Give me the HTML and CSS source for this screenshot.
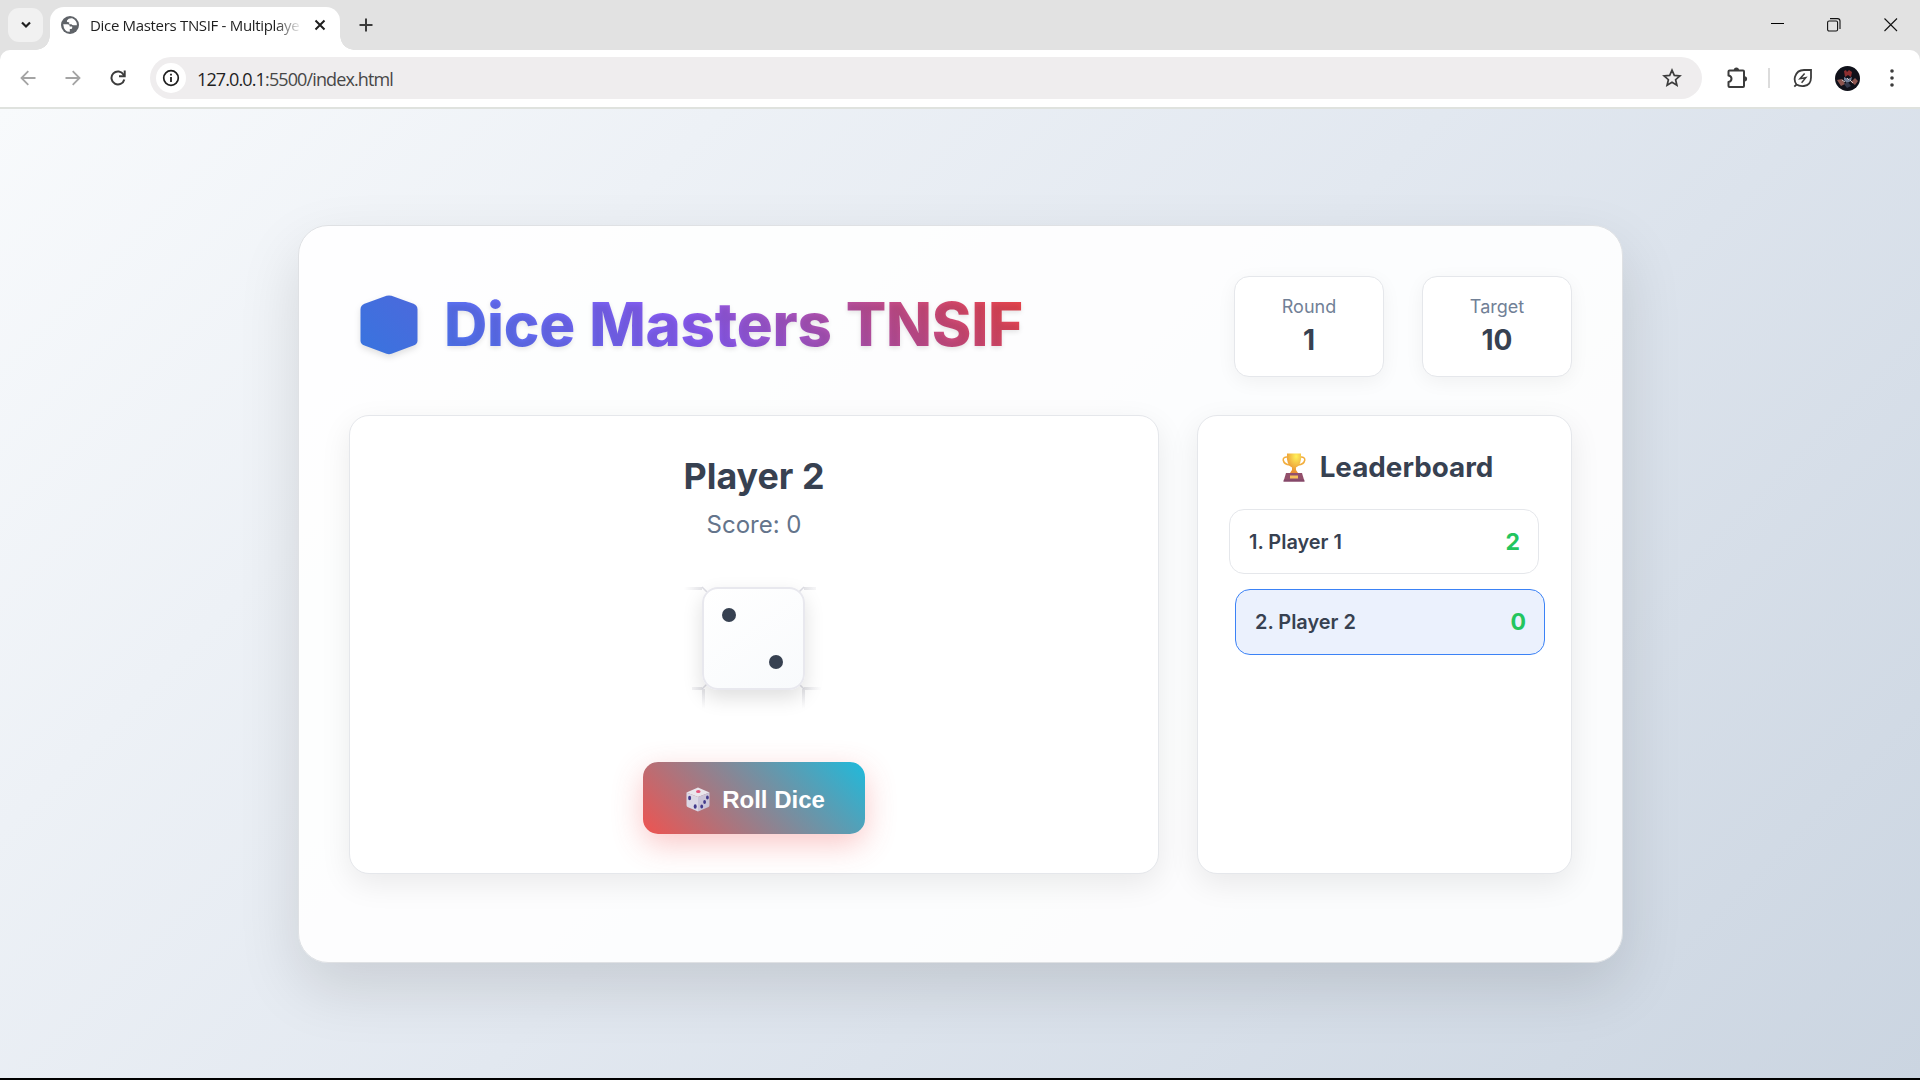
FILE: index.html
```html
<!DOCTYPE html>
<html lang="en">
<head>
<meta charset="utf-8">
<title>Dice Masters TNSIF - Multiplayer</title>
<link rel="stylesheet" href="styles.css">
</head>
<body>
<div class="tabstrip">
  <div class="tab-search"><svg width="12" height="8" viewBox="0 0 12 8"><path d="M2 1.5 6 5.5 10 1.5" fill="none" stroke="#1f1f1f" stroke-width="2.2"/></svg></div>
  <div class="tab">
    <svg class="globe" width="18" height="18" viewBox="0 0 18 18"><circle cx="9" cy="9" r="9" fill="#5f6368"/><path d="M2.2 8.2H6.500Q8.800 8.200 8.800 10.500H11.200V12Q11.200 13 10 13H8.800V15.800Q3 16 2.200 8.200ZM11.200 2.200Q7.500 1.800 6 4.500 5.200 6.300 7.200 6.300H8.200V8.200H10.500Q11 9.300 12.500 9.300H15.900Q16.200 4.500 11.200 2.200Z" fill="#fff"/></svg>
    <span class="tab-title">Dice Masters TNSIF - Multiplaye</span>
    <svg class="tab-close" width="12" height="12" viewBox="0 0 12 12"><path d="M1.500 1.500 10.500 10.500M10.500 1.500 1.500 10.500" stroke="#1f1f1f" stroke-width="2"/></svg>
  </div>
  <svg class="new-tab" width="14" height="14" viewBox="0 0 14 14"><path d="M7 .5V13.500M.5 7H13.500" stroke="#3c3c3c" stroke-width="2"/></svg>
  <div class="window-controls">
    <svg width="14" height="14" viewBox="0 0 14 14"><path d="M1 5.500H14" stroke="#000"/></svg>
    <svg width="14" height="14" viewBox="0 0 14 14" fill="none" stroke="#111" stroke-width="1.100"><rect x=".6" y="3" width="10" height="10" rx="1.500"/><path d="M3 .6H10.500Q13 .6 13 3V11"/></svg>
    <svg width="14" height="14" viewBox="0 0 14 14"><path d="M.5 .5 13 13M13 .5 .5 13" stroke="#111" stroke-width="1.100"/></svg>
  </div>
</div>
<div class="toolbar">
  <svg class="nav-icon" width="16" height="16" viewBox="0 0 16 16" fill="none" stroke="#a4a4a4" stroke-width="1.800"><path d="M15.500 8H2M8.300 1.200 1.500 8 8.300 14.800"/></svg>
  <svg class="nav-icon" width="16" height="16" viewBox="0 0 16 16" fill="none" stroke="#a4a4a4" stroke-width="1.800"><path d="M.5 8H14M7.700 1.200 14.500 8 7.700 14.800"/></svg>
  <svg class="nav-icon" width="16" height="16" viewBox="0 0 16 16" fill="none" stroke="#3c3c3c" stroke-width="2"><path d="M14.300 9.500A6.500 6.500 0 1 1 13.600 4.700L14.300 6"/><path d="M14.700 .5V6.200H9"/></svg>
  <div class="address">
    <div class="site-info"><svg width="18" height="18" viewBox="0 0 18 18"><circle cx="9" cy="9" r="7.300" fill="none" stroke="#1f1f1f" stroke-width="1.700"/><path d="M9 8V13M9 4.800V6.600" stroke="#1f1f1f" stroke-width="1.800"/></svg></div>
    <span class="url"><span class="host">127.0.0.1</span>:5500/index.html</span>
    <svg class="star" width="20" height="20" viewBox="0 0 20 20"><path d="M10 2.200 12.300 7.400 17.900 7.900 13.600 11.700 14.900 17.200 10 14.200 5.100 17.200 6.400 11.700 2.100 7.900 7.700 7.400Z" fill="none" stroke="#3c3c3c" stroke-width="1.700"/></svg>
  </div>
  <svg class="puzzle" width="22" height="22" viewBox="0 0 22 22"><path d="M3.500 3.600H17Q18 3.600 18 4.600V19Q18 20 17 20H3.500Q2.500 20 2.500 19V15Q5.500 14.400 5.500 11.800T2.500 8.600V4.600Q2.500 3.600 3.500 3.600Z" fill="none" stroke="#3c3c3c" stroke-width="2" stroke-linejoin="round"/><path d="M7.800 3A2.600 2.600 0 0 1 13 3ZM18.500 9.200A2.600 2.600 0 0 1 18.500 14.400Z" fill="#3c3c3c"/></svg>
  <span class="divider"></span>
  <svg class="leaf" width="20" height="20" viewBox="0 0 20 20" fill="none" stroke="#3c3c3c" stroke-width="1.800"><path d="M3.500 16.500Q.8 13 2 8.800C3.300 4.500 6 2 11 2H18V9.500C18 14.500 15 17.500 11 18Q6.500 18.500 3.500 16.500L1.300 18.600"/><path d="M11.600 5.500 7 10.700 12.800 9.700 8.600 14.800" stroke-width="1.500"/></svg>
  <svg class="avatar" width="25" height="25" viewBox="0 0 25 25"><circle cx="12.500" cy="12.500" r="12.500" fill="#10111a"/><path d="M9 5 11 4 12 6 14 4 17 6 16 11 13 9 10 11Z" fill="#8d2f30"/><path d="M9 11 13 13 17 11 16 15 12 17 9 14Z" fill="#70809a"/><path d="M2 14 7 13 10 18 6 20ZM16 16 20 12 23 15 20 19Z" fill="#8d554f"/><path d="M9 18 13 16 16 20 12 22Z" fill="#34394c"/><path d="M7 14 10 16M15 14 18 17M12 12 14 14" stroke="#d4c5c4"/></svg>
  <svg class="menu" width="4" height="18" viewBox="0 0 4 18" fill="#3c3c3c"><circle cx="2" cy="2" r="1.800"/><circle cx="2" cy="9" r="1.800"/><circle cx="2" cy="16" r="1.800"/></svg>
</div>

<main class="page">
  <section class="game">
    <header class="game-header">
      <h1>
        <svg class="hexagon" width="58" height="60" viewBox="0 0 58 60"><defs><linearGradient id="hex" x1="0" y1="1" x2="1" y2="0"><stop offset="0" stop-color="#3874df"/><stop offset="1" stop-color="#4c69dc"/></linearGradient></defs><path d="M26.500.8Q29 .1 31.500.8L53.500 8.800Q57.500 10.300 57.500 14.500V45.500Q57.500 49 53.500 50.600L31.500 58.700Q29 59.600 26.500 58.700L4.500 50.600Q.5 49 .5 45.500V14.500Q.5 10.300 4.500 8.800Z" fill="url(#hex)"/></svg>
        <span>Dice Masters TNSIF</span>
      </h1>
      <div class="stats">
        <div class="stat"><span class="stat-label">Round</span><span class="stat-value">1</span></div>
        <div class="stat"><span class="stat-label">Target</span><span class="stat-value">10</span></div>
      </div>
    </header>
    <div class="board">
      <div class="card play">
        <h2>Player 2</h2>
        <p class="score">Score: 0</p>
        <div class="die">
          <svg class="die-edges" width="150" height="150" viewBox="0 0 150 150"><defs><linearGradient id="fr"><stop offset="0" stop-color="#e4e4e8"/><stop offset="1" stop-color="#e4e4e8" stop-opacity="0"/></linearGradient><linearGradient id="fl" x1="1" x2="0"><stop offset="0" stop-color="#e4e4e8"/><stop offset="1" stop-color="#e4e4e8" stop-opacity="0"/></linearGradient><linearGradient id="fd" x2="0" y2="1"><stop offset="0" stop-color="#e4e4e8"/><stop offset="1" stop-color="#e4e4e8" stop-opacity="0"/></linearGradient></defs><path fill="url(#fl)" d="M6 24h18v3H6zM14 124h10v3H14z"/><path fill="url(#fr)" d="M126 24h12v3h-12zM126 124h18v3h-18z"/><path fill="url(#fd)" d="M24 126h3v20h-3zM124 126h3v20h-3z"/><path d="M24 24l5 5M126 24l-5 5M24 126l5-5M126 126l-5-5" stroke="#dddde4" stroke-width="1.500"/></svg>
          <div class="face"><span class="pip"></span><span class="pip pip-end"></span></div>
        </div>
        <button class="roll">
          <svg width="24" height="25" viewBox="0 0 24 25"><path d="M12 .5 23.500 5.500 12 10 .5 5.500Z" fill="#e9e6ec"/><path d="M.5 5.500 12 10V24.500L1.500 20Q.5 19.500.5 18Z" fill="#dcd8e5"/><path d="M23.500 5.500 12 10V24.500L22.500 20Q23.500 19.500 23.500 18Z" fill="#cac4d8"/><ellipse cx="12.300" cy="4.600" rx="2.300" ry="1.500" fill="#e4567c"/><g fill="#433b8c"><ellipse cx="3.600" cy="11" rx="1.500" ry="2.200"/><ellipse cx="9.200" cy="19.500" rx="1.500" ry="2.200"/><ellipse cx="21.400" cy="10.500" rx="1.400" ry="2.100"/><ellipse cx="18.600" cy="15" rx="1.400" ry="2.100"/><ellipse cx="15.700" cy="19.500" rx="1.400" ry="2.100"/></g></svg>
          <span>Roll Dice</span>
        </button>
      </div>
      <div class="card leaderboard">
        <h3>
          <svg width="24" height="29" viewBox="0 0 24 29"><defs><radialGradient id="cup" cx=".65" cy=".15" r=".8"><stop offset="0" stop-color="#fff15a"/><stop offset="1" stop-color="#ea9133"/></radialGradient></defs><path d="M6 4.200Q1 3.500 1.200 7 2 11.500 8 12M18 4.200Q23 3.500 22.800 7 22 11.500 16 12" fill="none" stroke="#f2ae3e" stroke-width="1.500"/><path d="M5 .5H19Q20 11.500 14 14.500V17L16 20H8L10 17V14.500Q4 11.500 5 .5Z" fill="url(#cup)"/><path d="M4 20H20L22.500 28.500H1.500Z" fill="#93506b"/><path d="M1.900 26.500H22.100L22.500 28.500H1.500Z" fill="#84486a"/><rect x="8" y="22.500" width="8" height="3" fill="#f7c05a"/></svg>
          <span>Leaderboard</span>
        </h3>
        <ol class="ranking">
          <li><span>1. Player 1</span><b>2</b></li>
          <li class="current"><span>2. Player 2</span><b>0</b></li>
        </ol>
      </div>
    </div>
  </section>
</main>
</body>
</html>
```
FILE: styles.css
```css
* { box-sizing: border-box; }
body {
  margin: 0;
  height: 1080px;
  overflow: hidden;
  display: flex;
  flex-direction: column;
  background: #e2e2e2;
  border-bottom: 2px solid #000;
  font-family: Inter, "Liberation Sans", sans-serif;
  color: #374151;
}
svg { display: block; flex: none; }
h1, h2, h3, p, ol { margin: 0; padding: 0; }

/* Browser chrome */
.tabstrip { height: 50px; flex: none; display: flex; align-items: center; padding-left: 8px; }
.tab-search { width: 35px; height: 34px; border-radius: 11px; background: #f1f1f1; display: grid; place-items: center; }
.tab {
  width: 290px; height: 43px; margin: 7px 0 0 7px; padding: 0 14px 7px 11px;
  background: #fff; border-radius: 14px 14px 0 0; display: flex; align-items: center;
  position: relative;
}
.tab::before, .tab::after { content: ""; position: absolute; bottom: 0; width: 14px; height: 14px; }
.tab::before { left: -14px; background: radial-gradient(circle at 0 0, transparent 13.5px, #fff 14px); }
.tab::after { right: -14px; background: radial-gradient(circle at 100% 0, transparent 13.5px, #fff 14px); }
.tab-title {
  margin-left: 11px; width: 212px; white-space: nowrap;
  font: 15px/22px "Open Sans", sans-serif; letter-spacing: -0.32px; color: #1f1f1f;
  mask-image: linear-gradient(90deg, #000 185px, transparent 212px);
}
.tab-close { margin-left: auto; }
.new-tab { margin-left: 19px; }
.window-controls { margin-left: auto; padding-right: 22px; display: flex; gap: 43px; }
.toolbar {
  height: 59px; flex: none; display: flex; align-items: center; padding: 0 26px 1px 20px;
  background: #fff; border-radius: 10px 10px 0 0; border-bottom: 2px solid #dfe2de;
}
.nav-icon { margin-right: 29px; }
.address {
  width: 1552px; height: 42px; margin-left: -5px; padding: 0 20px 0 6px; border-radius: 21px;
  background: #efedee; display: flex; align-items: center;
}
.site-info { width: 30px; height: 30px; border-radius: 50%; background: #fff; display: grid; place-items: center; }
.url { margin-left: 11px; padding-top: 1px; font: 18px/26px "Open Sans", sans-serif; letter-spacing: -0.88px; color: #474747; }
.host { color: #1f1f1f; }
.star { margin-left: auto; }
.puzzle { margin-left: 24px; }
.divider { width: 2px; height: 20px; margin: 0 23px 0 20px; background: #dcdcdc; }
.avatar { margin-left: 22px; }
.menu { margin-left: auto; }

/* Game */
.page {
  flex: 1; padding: 116px 297px 0 298px;
  background: linear-gradient(135deg, #f8fafc 0%, #e2e8f0 50%, #cbd5e1 100%);
}
.game {
  height: 738px; padding: 50px; border: 1px solid #dfe1e4; border-radius: 30px;
  background: rgba(255, 255, 255, 0.9);
  box-shadow: 0 25px 62px rgba(0, 0, 0, 0.12);
}
.game-header { height: 101px; display: flex; justify-content: space-between; align-items: center; }
.hexagon { filter: drop-shadow(0 3px 3px rgba(0, 0, 0, 0.12)); }
h1 {
  display: flex; align-items: center; gap: 26px; margin: 0 0 4px 11px;
  font-size: 60px; font-weight: 800; line-height: 73px; letter-spacing: -0.25px; word-spacing: 1.2px;
  color: transparent; text-shadow: 0 2px 5px rgba(0, 0, 0, 0.1);
  background: linear-gradient(45deg, #3b82f6, #8b5cf6, #ef4444);
  -webkit-background-clip: text; background-clip: text;
}
.stats { display: flex; gap: 38px; }
.stat {
  width: 150px; height: 101px; border: 1px solid #e5e7eb; border-radius: 15px; background: #fff;
  display: flex; flex-direction: column; align-items: center; padding-top: 17px;
  box-shadow: 0 5px 19px rgba(0, 0, 0, 0.05);
}
.stat-label { font-size: 18px; line-height: 26px; color: #718096; }
.stat-value { font-size: 28px; font-weight: 700; line-height: 41px; }
.board { margin-top: 38px; display: grid; grid-template-columns: 810px 375px; justify-content: space-between; }
.card {
  height: 459px; border: 1px solid #e5e7eb; border-radius: 20px; background: #fff;
  box-shadow: 0 10px 31px rgba(0, 0, 0, 0.08);
}
.play { display: flex; flex-direction: column; align-items: center; padding-top: 38px; }
h2 { font-size: 35.8px; font-weight: 700; line-height: 44px; }
.score { margin-top: 9px; font-size: 24px; line-height: 36px; color: #64748b; }
.die { position: relative; width: 103px; height: 103px; margin-top: 44px; left: -1px; }
.die-edges { position: absolute; left: -24px; top: -24px; }
.face {
  position: relative; height: 103px; padding: 19px 20px 19px 18px; border: 2px solid #e8e8ee; border-radius: 16px;
  background: linear-gradient(145deg, #fff, #f8fafc);
  box-shadow: 0 8px 20px rgba(0, 0, 0, 0.13);
  display: flex; justify-content: space-between;
}
.pip { width: 14px; height: 14px; border-radius: 50%; background: #374151; }
.pip-end { align-self: flex-end; }
.roll {
  width: 222px; height: 72px; margin-top: 72px; border: 0; border-radius: 15px;
  background: linear-gradient(45deg, #ef5350, #1fbadb);
  box-shadow: 0 10px 31px rgba(239, 68, 68, 0.3);
  display: flex; justify-content: center; align-items: center; gap: 12px; padding: 3px 0 0 3px;
  font: bold 24px/30px "Liberation Sans", Arial, sans-serif; color: #fff;
}
.leaderboard { padding: 31px; }
h3 {
  display: flex; justify-content: center; align-items: center; gap: 14px; padding-left: 6px;
  font-size: 27.8px; font-weight: 700; line-height: 40px;
}
.ranking { list-style: none; margin-top: 22px; }
.ranking li {
  width: 310px; height: 65px; margin-bottom: 15px; padding: 0 18px 0 19px; border: 1px solid #e5e7eb;
  border-radius: 15px; display: flex; justify-content: space-between; align-items: center;
  font-size: 19.9px; font-weight: 600;
}
.ranking b { font-size: 23px; font-weight: 700; color: #22c55e; }
.ranking .current { height: 66px; border-color: #3b82f6; background: #ebf1fd; transform: translateX(6px); }
```
